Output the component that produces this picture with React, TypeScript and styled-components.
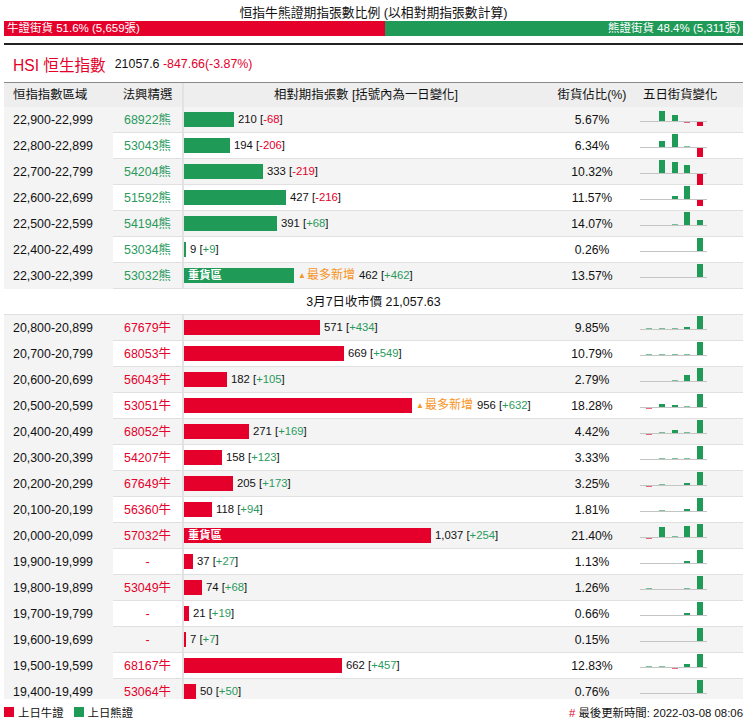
import React from 'react';
import styled, { createGlobalStyle } from 'styled-components';

const RED = '#e4002b';
const GREEN = '#1f9a57';
const TXT_GREEN = '#2a9a5c';
const ORANGE = '#f7931e';

type Row = {
	range: string;
	code: string;
	qty: number;
	chg: number;
	pct: string;
	spark: number[];
	heavy?: boolean;
	most?: boolean;
};

const bears: Row[] = [
	{ range: '22,900-22,999', code: '68922熊', qty: 210, chg: -68, pct: '5.67%', spark: [0, 10, 6, -1, -4] },
	{ range: '22,800-22,899', code: '53043熊', qty: 194, chg: -206, pct: '6.34%', spark: [0, 6, 13, 1, -9] },
	{ range: '22,700-22,799', code: '54204熊', qty: 333, chg: -219, pct: '10.32%', spark: [0, 13, 11, 8, -11] },
	{ range: '22,600-22,699', code: '51592熊', qty: 427, chg: -216, pct: '11.57%', spark: [0, 0, 3, 13, -6] },
	{ range: '22,500-22,599', code: '54194熊', qty: 391, chg: 68, pct: '14.07%', spark: [0, 0, 1, 13, 5] },
	{ range: '22,400-22,499', code: '53034熊', qty: 9, chg: 9, pct: '0.26%', spark: [0, 0, 0, 0, 13] },
	{ range: '22,300-22,399', code: '53032熊', qty: 462, chg: 462, pct: '13.57%', spark: [0, 0, 0, 0, 13], heavy: true, most: true },
];

const bulls: Row[] = [
	{ range: '20,800-20,899', code: '67679牛', qty: 571, chg: 434, pct: '9.85%', spark: [1, 1, 1, 2, 13] },
	{ range: '20,700-20,799', code: '68053牛', qty: 669, chg: 549, pct: '10.79%', spark: [1, 1, 1, 1, 13] },
	{ range: '20,600-20,699', code: '56043牛', qty: 182, chg: 105, pct: '2.79%', spark: [0, 0, 1, 6, 13] },
	{ range: '20,500-20,599', code: '53051牛', qty: 956, chg: 632, pct: '18.28%', spark: [-1, 3, 2, 1, 13], most: true },
	{ range: '20,400-20,499', code: '68052牛', qty: 271, chg: 169, pct: '4.42%', spark: [-1, 1, 3, 1, 13] },
	{ range: '20,300-20,399', code: '54207牛', qty: 158, chg: 123, pct: '3.33%', spark: [0, 1, 1, 1, 13] },
	{ range: '20,200-20,299', code: '67649牛', qty: 205, chg: 173, pct: '3.25%', spark: [-1, 1, 0, 2, 13] },
	{ range: '20,100-20,199', code: '56360牛', qty: 118, chg: 94, pct: '1.81%', spark: [0, 1, 0, 2, 13] },
	{ range: '20,000-20,099', code: '57032牛', qty: 1037, chg: 254, pct: '21.40%', spark: [-1, 10, 1, 11, 13], heavy: true },
	{ range: '19,900-19,999', code: '-', qty: 37, chg: 27, pct: '1.13%', spark: [0, 0, 0, 2, 13] },
	{ range: '19,800-19,899', code: '53049牛', qty: 74, chg: 68, pct: '1.26%', spark: [1, 0, 0, 1, 13] },
	{ range: '19,700-19,799', code: '-', qty: 21, chg: 19, pct: '0.66%', spark: [0, 0, 0, 2, 13] },
	{ range: '19,600-19,699', code: '-', qty: 7, chg: 7, pct: '0.15%', spark: [0, 0, 0, 0, 13] },
	{ range: '19,500-19,599', code: '68167牛', qty: 662, chg: 457, pct: '12.83%', spark: [1, 1, -1, 3, 13] },
	{ range: '19,400-19,499', code: '53064牛', qty: 50, chg: 50, pct: '0.76%', spark: [0, 0, 0, 0, 13] },
];

const GlobalStyle = createGlobalStyle`
	body {
		margin: 0;
		background: #fff;
		font-family: 'Liberation Sans', 'Noto Sans CJK TC', sans-serif;
		color: #111;
	}
`;

const Page = styled.div`
	width: 739px;
	padding: 0 4px;
	height: 724px;
	display: flex;
	flex-direction: column;
`;

const Title = styled.div`
	padding-top: 5px;
	height: 16px;
	line-height: 16px;
	font-size: 12.8px;
	text-align: center;
`;

const RatioBar = styled.div`
	display: flex;
	height: 15px;
	line-height: 15px;
	font-size: 11.5px;
	color: #fff;
	border-bottom: 2px solid #222;
	padding-bottom: 7px;
`;

const RatioPart = styled.div<{ $color: string; $align: string }>`
	box-sizing: border-box;
	background: ${p => p.$color};
	text-align: ${p => p.$align};
	padding: 0 3px;
	white-space: nowrap;
`;

const IndexLine = styled.div`
	height: 37px;
	display: flex;
	align-items: center;
	padding-left: 9px;
	gap: 9px;
	border-bottom: 1px solid #8a8a8a;
	font-size: 12.4px;
`;

const IndexName = styled.span`
	color: ${RED};
	font-size: 15.6px;
`;

const Red = styled.span`
	color: ${RED};
`;

const Green = styled.span`
	color: ${TXT_GREEN};
`;

const cols = '109px 69px 366px 88px 1fr';

const HeadRow = styled.div`
	display: grid;
	grid-template-columns: ${cols};
	height: 24px;
	line-height: 24px;
	background: #eeeeee;
	font-size: 12.4px;
`;

const HeadCell = styled.div<{ $align?: string; $pad?: number; $line?: boolean }>`
	text-align: ${p => p.$align || 'center'};
	padding-left: ${p => p.$pad || 0}px;
	border-left: ${p => (p.$line ? '2px solid #e2e2e2' : 'none')};
	white-space: nowrap;
`;

const Body = styled.div`
	height: 592px;
	overflow: hidden;
`;

const TableRow = styled.div<{ $stripe: boolean }>`
	display: grid;
	grid-template-columns: ${cols};
	height: 25px;
	border-bottom: 1px solid #e0e0e0;
	background: ${p => (p.$stripe ? '#f4f4f4' : '#fff')};
	font-size: 12.4px;
`;

const RangeCell = styled.div`
	background: #f4f4f4;
	padding-left: 9px;
	line-height: 26px;
`;

const CodeCell = styled.div<{ $bull: boolean }>`
	text-align: center;
	line-height: 26px;
	color: ${p => (p.$bull ? RED : TXT_GREEN)};
`;

const BarCell = styled.div`
	border-left: 2px solid #e2e2e2;
	display: flex;
	align-items: flex-start;
	padding-top: 5px;
	gap: 4px;
	font-size: 11.3px;
	white-space: nowrap;
`;

const Bar = styled.div<{ $bull: boolean }>`
	height: 15px;
	line-height: 15px;
	background: ${p => (p.$bull ? RED : GREEN)};
	color: #fff;
	font-size: 11.3px;
	font-weight: bold;
	box-sizing: border-box;
	overflow: hidden;
	flex: none;
`;

const HeavyLabel = styled.span`
	padding-left: 4px;
`;

const BarText = styled.span`
	line-height: 15px;
`;

const Most = styled.span`
	color: ${ORANGE};
	font-size: 12px;
	margin-right: 4px;
`;

const Tri = styled.span`
	font-size: 8px;
	vertical-align: 1px;
	margin-right: 1px;
`;

const PctCell = styled.div`
	text-align: center;
	line-height: 26px;
	font-size: 12.2px;
`;

const SparkCell = styled.div`
	padding-left: 4px;
`;

const PriceRow = styled.div`
	height: 25px;
	line-height: 26px;
	border-bottom: 1px solid #e0e0e0;
	text-align: center;
	font-size: 12.4px;
	background: #fff;
`;

const Footer = styled.div`
	flex: 1;
	display: flex;
	justify-content: space-between;
	align-items: center;
	font-size: 11.4px;
`;

const Legend = styled.div`
	display: flex;
	align-items: center;
	gap: 3px;
`;

const Swatch = styled.span<{ $color: string }>`
	display: inline-block;
	width: 10px;
	height: 10px;
	background: ${p => p.$color};
	margin-right: 1px;
`;

const LegendItem = styled.span`
	margin-right: 7px;
`;

function Spark({ data }: { data: number[] }) {
	const xs = [6, 19, 32, 44, 57];
	return (
		<svg width="70" height="26" style={{ display: 'block' }}>
			<rect x="0" y="14" width="67" height="1" fill="#c4c4c4" />
			{data.map((v, i) =>
				v === 0 ? null : (
					<rect
						key={i}
						x={xs[i]}
						y={v > 0 ? 14 - v : 15}
						width="6"
						height={Math.abs(v)}
						fill={v > 0 ? GREEN : RED}
						opacity={Math.abs(v) <= 1 ? 0.6 : 1}
					/>
				)
			)}
		</svg>
	);
}

function Change({ v }: { v: number }) {
	return (
		<>
			[{v < 0 ? <Red>{v}</Red> : <Green>+{v}</Green>}]
		</>
	);
}

function DataRow({ row, bull, stripe }: { row: Row; bull: boolean; stripe: boolean }) {
	const w = Math.max(2, Math.round(row.qty * 0.2385));
	return (
		<TableRow $stripe={stripe}>
			<RangeCell>{row.range}</RangeCell>
			<CodeCell $bull={bull || row.code === '-'}>{row.code}</CodeCell>
			<BarCell>
				<Bar $bull={bull} style={{ width: w }}>
					{row.heavy && <HeavyLabel>重貨區</HeavyLabel>}
				</Bar>
				<BarText>
					{row.most && (
						<Most>
							<Tri>▲</Tri>最多新增
						</Most>
					)}
					{row.qty.toLocaleString('en-US')} <Change v={row.chg} />
				</BarText>
			</BarCell>
			<PctCell>{row.pct}</PctCell>
			<SparkCell>
				<Spark data={row.spark} />
			</SparkCell>
		</TableRow>
	);
}

export default function App() {
	return (
		<Page>
			<GlobalStyle />
			<Title>恒指牛熊證期指張數比例 (以相對期指張數計算)</Title>
			<RatioBar>
				<RatioPart $color={RED} $align="left" style={{ width: '51.6%' }}>
					牛證街貨 51.6% (5,659張)
				</RatioPart>
				<RatioPart $color={GREEN} $align="right" style={{ flex: 1 }}>
					熊證街貨 48.4% (5,311張)
				</RatioPart>
			</RatioBar>
			<IndexLine>
				<IndexName>HSI 恒生指數</IndexName>
				<span>
					21057.6 <Red>-847.66(-3.87%)</Red>
				</span>
			</IndexLine>
			<HeadRow>
				<HeadCell $align="left" $pad={9}>恒指指數區域</HeadCell>
				<HeadCell>法興精選</HeadCell>
				<HeadCell $line>相對期指張數 [括號內為一日變化]</HeadCell>
				<HeadCell>街貨佔比(%)</HeadCell>
				<HeadCell $align="left" $pad={7}>五日街貨變化</HeadCell>
			</HeadRow>
			<Body>
				{bears.map((r, i) => (
					<DataRow key={r.range} row={r} bull={false} stripe={i % 2 === 0} />
				))}
				<PriceRow>3月7日收市價 21,057.63</PriceRow>
				{bulls.map((r, i) => (
					<DataRow key={r.range} row={r} bull={true} stripe={(i + 8) % 2 === 0} />
				))}
			</Body>
			<Footer>
				<Legend>
					<Swatch $color={RED} />
					<LegendItem>上日牛證</LegendItem>
					<Swatch $color={GREEN} />
					<LegendItem>上日熊證</LegendItem>
				</Legend>
				<div>
					<Red>#</Red> 最後更新時間: 2022-03-08 08:06
				</div>
			</Footer>
		</Page>
	);
}
